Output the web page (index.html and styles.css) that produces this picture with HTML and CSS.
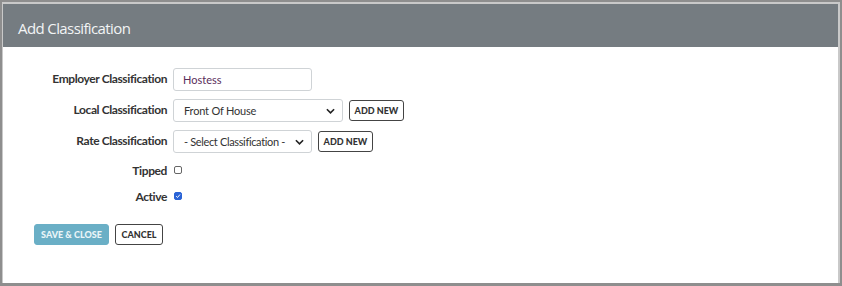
FILE: index.html
```html
<!DOCTYPE html>
<html>
<head>
<meta charset="utf-8">
<link rel="stylesheet" href="styles.css">
</head>
<body>
<div class="frame">
  <div class="dialog">
    <div class="header">Add Classification</div>
    <div class="content">
      <div class="form">
        <div class="row">
          <label class="label">Employer Classification</label>
          <input class="input text" type="text" value="Hostess">
        </div>
        <div class="row">
          <label class="label">Local Classification</label>
          <div class="select wide"><span>Front Of House</span><svg class="chev" viewBox="0 0 10 6" width="9" height="6"><path d="M1 1l4 4 4-4" fill="none" stroke="#222" stroke-width="1.8"/></svg></div>
          <button class="btn outline small">ADD NEW</button>
        </div>
        <div class="row">
          <label class="label">Rate Classification</label>
          <div class="select narrow"><span>- Select Classification -</span><svg class="chev" viewBox="0 0 10 6" width="9" height="6"><path d="M1 1l4 4 4-4" fill="none" stroke="#222" stroke-width="1.8"/></svg></div>
          <button class="btn outline small">ADD NEW</button>
        </div>
        <div class="row check-row first">
          <label class="label">Tipped</label>
          <span class="box"></span>
        </div>
        <div class="row check-row">
          <label class="label">Active</label>
          <span class="box checked"><svg viewBox="0 0 8 8" width="8" height="8"><path d="M1.5 4.2l1.8 1.8 3.4-4" fill="none" stroke="#fff" stroke-width="1.3"/></svg></span>
        </div>
      </div>
      <div class="actions">
        <button class="btn primary">SAVE &amp; CLOSE</button>
        <button class="btn outline cancel">CANCEL</button>
      </div>
    </div>
  </div>
</div>
</body>
</html>
```
FILE: styles.css
```css
html, body {
  margin: 0;
  padding: 0;
  background: #ffffff;
}
body {
  width: 842px;
  height: 286px;
  overflow: hidden;
  font-family: "Lato", "Noto Sans", sans-serif;
}
.frame {
  box-sizing: border-box;
  width: 842px;
  height: 286px;
  border-style: solid;
  border-color: #8e8e8e;
  border-width: 2px 2px 3px 2px;
  background: #c9c9c9;
  padding: 2px 2px 0 1px;
}
.dialog {
  background: #fff;
  height: 100%;
  display: flex;
  flex-direction: column;
}
.header {
  box-sizing: border-box;
  height: 43px;
  background: #757c81;
  color: #f2f4f5;
  font-family: "Open Sans", sans-serif;
  font-weight: 400;
  font-size: 15px;
  display: flex;
  align-items: center;
  padding: 4px 0 0 15px;
  letter-spacing: -0.6px;
  white-space: nowrap;
}
.content {
  flex: 1;
  padding: 21px 0 0 30px;
}
.form {
  display: flex;
  flex-direction: column;
}
.row {
  display: flex;
  align-items: center;
  height: 23px;
  margin-bottom: 8px;
}
.label {
  width: 134px;
  text-align: right;
  font-weight: 700;
  font-size: 12px;
  letter-spacing: -0.4px;
  color: #333;
  padding-right: 6px;
  margin-top: -3px;
  white-space: nowrap;
}
.input, .select {
  box-sizing: border-box;
  height: 23px;
  border: 1px solid #cfd3d6;
  border-radius: 3px;
  background: #fff;
  font-family: "Lato", sans-serif;
  font-size: 11px;
  color: #333;
  white-space: nowrap;
}
.text {
  width: 139px;
  padding: 0 9px;
  color: #5a2d5a;
  outline: none;
}
.select {
  display: flex;
  align-items: center;
  justify-content: space-between;
  padding: 0 7px 0 10px;
}
.select span { color: #333; letter-spacing: -0.2px; }
.narrow span { letter-spacing: -0.35px; }
.wide { width: 170px; }
.narrow { width: 139px; }
.chev { display: block; flex: none; }
.btn {
  box-sizing: border-box;
  font-family: "Lato", sans-serif;
  font-weight: 900;
  font-size: 9px;
  letter-spacing: 0;
  border-radius: 3px;
  height: 21px;
  padding: 0;
  cursor: pointer;
  white-space: nowrap;
  text-align: center;
}
.outline {
  background: #fff;
  border: 1px solid #444;
  color: #333;
}
.small {
  margin-left: 6px;
  width: 55px;
}
.check-row {
  height: 14px;
  margin-bottom: 12px;
}
.check-row.first { margin-top: 4px; }
.box {
  box-sizing: border-box;
  width: 8px;
  height: 8px;
  border: 1px solid #666;
  border-radius: 2px;
  margin-top: -4px;
  margin-left: 1px;
  display: flex;
  align-items: center;
  justify-content: center;
}
.box.checked {
  background: #2a63d6;
  border-color: #2a63d6;
}
.box svg { display: block; }
.actions {
  display: flex;
  gap: 6px;
  margin-top: 7px;
  margin-left: 1px;
}
.primary {
  background: #6aafc6;
  border: 1px solid #6aafc6;
  color: #eaf5f8;
  width: 75px;
}
.cancel {
  width: 48px;
}
```
